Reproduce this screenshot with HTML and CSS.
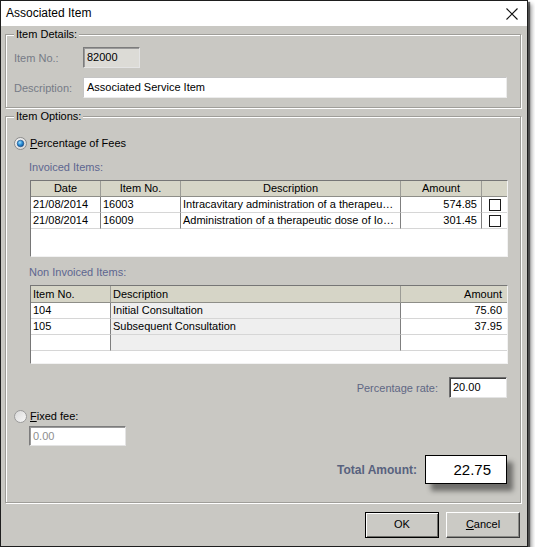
FILE: index.html
```html
<!DOCTYPE html>
<html>
<head>
<meta charset="utf-8">
<title>Associated Item</title>
<link rel="stylesheet" href="styles.css">
</head>
<body>
<div class="window">
  <div class="titlebar">
    <span class="title">Associated Item</span>
    <svg class="close" width="12" height="12" viewBox="0 0 12 12"><path d="M0.5 0.5L11.5 11.5M11.5 0.5L0.5 11.5" stroke="#111" stroke-width="1.1" fill="none"/></svg>
  </div>
  <div class="client">
    <div class="group details">
      <div class="legend">Item Details:</div>
      <div class="field-row first">
        <span class="label">Item No.:</span>
        <div class="input disabled itemno">82000</div>
      </div>
      <div class="field-row second">
        <span class="label">Description:</span>
        <div class="input flat desc">Associated Service Item</div>
      </div>
    </div>

    <div class="group options">
      <div class="legend">Item Options:</div>

      <div class="radio-row pct">
        <svg class="radio" width="13" height="13" viewBox="0 0 13 13">
          <defs>
            <linearGradient id="rg1" x1="0" y1="0" x2="1" y2="1">
              <stop offset="0" stop-color="#f4f4f4"/>
              <stop offset="1" stop-color="#d4d4d4"/>
            </linearGradient>
            <radialGradient id="dot" cx="0.4" cy="0.35" r="0.7">
              <stop offset="0" stop-color="#9fe0ff"/>
              <stop offset="0.5" stop-color="#2c8fd6"/>
              <stop offset="1" stop-color="#0b4d94"/>
            </radialGradient>
          </defs>
          <circle cx="6.5" cy="6.5" r="6" fill="url(#rg1)" stroke="#8a8a8a" stroke-width="1"/>
          <circle cx="6.5" cy="6.5" r="3.3" fill="url(#dot)" stroke="#1d4f84" stroke-width="0.6"/>
        </svg>
        <span class="rlabel"><u>P</u>ercentage of Fees</span>
      </div>

      <div class="sub">
        <div class="caption">Invoiced Items:</div>
        <div class="grid inv">
          <div class="gr hdr">
            <div class="c ctr">Date</div>
            <div class="c ctr">Item No.</div>
            <div class="c ctr">Description</div>
            <div class="c ctr">Amount</div>
            <div class="c last"></div>
          </div>
          <div class="gr row">
            <div class="c">21/08/2014</div>
            <div class="c">16003</div>
            <div class="c">Intracavitary administration of a therapeu…</div>
            <div class="c num">574.85</div>
            <div class="c last chk"><span class="box"></span></div>
          </div>
          <div class="gr row">
            <div class="c">21/08/2014</div>
            <div class="c">16009</div>
            <div class="c">Administration of a therapeutic dose of Io…</div>
            <div class="c num">301.45</div>
            <div class="c last chk"><span class="box"></span></div>
          </div>
        </div>

        <div class="caption cap2">Non Invoiced Items:</div>
        <div class="grid non">
          <div class="gr hdr">
            <div class="c">Item No.</div>
            <div class="c">Description</div>
            <div class="c last num">Amount</div>
          </div>
          <div class="gr row">
            <div class="c">104</div>
            <div class="c shade">Initial Consultation</div>
            <div class="c last num">75.60</div>
          </div>
          <div class="gr row">
            <div class="c">105</div>
            <div class="c shade">Subsequent Consultation</div>
            <div class="c last num">37.95</div>
          </div>
          <div class="gr row">
            <div class="c"></div>
            <div class="c shade"></div>
            <div class="c last num"></div>
          </div>
        </div>
      </div>

      <div class="rate-row">
        <span class="rate-label">Percentage rate:</span>
        <div class="input rate">20.00</div>
      </div>

      <div class="radio-row fixed">
        <svg class="radio" width="13" height="13" viewBox="0 0 13 13">
          <defs>
            <linearGradient id="rg2" x1="0" y1="0" x2="1" y2="1">
              <stop offset="0" stop-color="#d8d8d8"/>
              <stop offset="1" stop-color="#fafafa"/>
            </linearGradient>
          </defs>
          <circle cx="6.5" cy="6.5" r="6" fill="url(#rg2)" stroke="#9a9a9a" stroke-width="1"/>
        </svg>
        <span class="rlabel"><u>F</u>ixed fee:</span>
      </div>
      <div class="input fee">0.00</div>

      <div class="total-row">
        <span class="total-label">Total Amount:</span>
        <div class="total-box">22.75</div>
      </div>
    </div>

    <div class="buttons">
      <div class="btn default">OK</div>
      <div class="btn"><u>C</u>ancel</div>
    </div>
  </div>
</div>
</body>
</html>
```

FILE: styles.css
```css
html, body {
  margin: 0;
  padding: 0;
  background: #ffffff;
}

body {
  font-family: "Liberation Sans", Arial, sans-serif;
  font-size: 11px;
  color: #000;
}

.window {
  width: 528px;
  height: 547px;
  box-sizing: border-box;
  border: 1px solid #1e1e1e;
  background: #c9c8c3;
  box-shadow: 2px 2px 1px rgba(0,0,0,0.55), 4px 4px 4px rgba(0,0,0,0.35);
  display: flex;
  flex-direction: column;
}

.titlebar {
  height: 25px;
  background: #ffffff;
  display: flex;
  align-items: center;
  justify-content: space-between;
  padding: 0 9px 0 5px;
  flex: none;
}

.title {
  font-size: 12px;
  line-height: 15px;
}

.close {
  display: block;
}

.client {
  padding: 0 6px 0 4px;
  display: flex;
  flex-direction: column;
}

.group {
  border: 1px solid #9f9e99;
  box-shadow: 1px 1px 0 #ffffff, inset 1px 1px 0 #ffffff;
  box-sizing: border-box;
  padding: 0 12px 0 8px;
  display: flex;
  flex-direction: column;
}

.legend {
  width: max-content;
  margin: -7px 0 0 0;
  padding: 0 2px;
  background: #c9c8c3;
  line-height: 13px;
  height: 13px;
}

.details {
  margin-top: 8px;
  height: 74px;
}

.options {
  margin-top: 8px;
  height: 387px;
}

.field-row {
  display: flex;
  align-items: center;
}

.field-row.first { margin-top: 6px; }
.field-row.second { margin-top: 9px; }

.label {
  width: 69px;
  color: #767b86;
}

.input {
  box-sizing: border-box;
  height: 21px;
  line-height: 19px;
  padding: 0 3px;
  background: #ffffff;
  border: 1px solid;
  border-color: #7c7c7c #e4e4e4 #e4e4e4 #7c7c7c;
  box-shadow: inset 1px 1px 0 #9a9a9a;
  white-space: nowrap;
}

.input.flat {
  border-color: #c4c4c4 #ececec #ececec #c4c4c4;
  box-shadow: none;
}

.input.disabled {
  background: #dcdbd6;
}

.itemno { width: 57px; }
.desc { width: 424px; }

.radio-row {
  display: flex;
  align-items: center;
  height: 15px;
}

.radio {
  display: block;
  flex: none;
}

.rlabel {
  margin-left: 3px;
  line-height: 15px;
}

.pct { margin-top: 13px; }

.sub {
  margin-left: 16px;
  display: flex;
  flex-direction: column;
}

.caption {
  margin-top: 10px;
  line-height: 13px;
  height: 13px;
  color: #5d6690;
  margin-left: -1px;
}

.caption.cap2 { margin-top: 9px; }

.grid {
  margin-top: 6px;
  width: 478px;
  box-sizing: border-box;
  border: 1px solid;
  border-color: #767676 #f2f2f2 #f2f2f2 #767676;
  background: #ffffff;
}

.grid.inv { height: 77px; }
.grid.non { height: 79px; }

.gr {
  display: grid;
}

.inv .gr { grid-template-columns: 70px 80px 220px 81px 25px; }
.non .gr { grid-template-columns: 80px 290px 106px; }

.c {
  box-sizing: border-box;
  height: 16px;
  line-height: 15px;
  padding: 0 2px;
  border-right: 1px solid #7f7f7f;
  border-bottom: 1px solid #d6d6d6;
  white-space: nowrap;
  overflow: hidden;
}

.c.last { border-right: none; }

.hdr .c {
  background: #d6d5c7;
  border-right-color: #9c9c96;
  border-bottom-color: #8e8e88;
}

.non .hdr .c { height: 17px; line-height: 16px; }

.c.ctr { text-align: center; }
.c.num { text-align: right; padding-right: 4px; }
.non .c.num { padding-right: 5px; }
.c.shade { background: #efefef; }

.c.chk {
  display: flex;
  align-items: center;
  justify-content: center;
}

.box {
  width: 12px;
  height: 12px;
  box-sizing: border-box;
  border: 1px solid #1a1a1a;
  background: #fff;
  margin-left: 1px;
}

.rate-row {
  margin-top: 13px;
  margin-right: 1px;
  display: flex;
  align-items: center;
  justify-content: flex-end;
}

.rate-label {
  color: #5f6784;
  margin-right: 11px;
}

.rate {
  width: 58px;
  border-color: #6e6e6e #e4e4e4 #e4e4e4 #6e6e6e;
  box-shadow: inset 1px 1px 0 #404040;
}

.fixed { margin-top: 11px; }

.fee {
  margin-top: 2px;
  margin-left: 15px;
  width: 97px;
  height: 20px;
  line-height: 18px;
  color: #8e8e8e;
}

.total-row {
  margin-top: 9px;
  margin-right: 1px;
  display: flex;
  align-items: center;
  justify-content: flex-end;
}

.total-label {
  font-size: 12px;
  font-weight: bold;
  color: #58627e;
  margin-right: 8px;
}

.total-box {
  width: 82px;
  height: 29px;
  box-sizing: border-box;
  border: 1px solid #000;
  background: #fff;
  box-shadow: 6px 7px 5px rgba(0,0,0,0.45);
  font-size: 15px;
  line-height: 27px;
  text-align: right;
  padding-right: 15px;
}

.buttons {
  margin-top: 9px;
  margin-right: 1px;
  display: flex;
  justify-content: flex-end;
  gap: 7px;
}

.btn {
  width: 74px;
  height: 26px;
  box-sizing: border-box;
  border: 1px solid;
  border-color: #ffffff #3c3c3c #3c3c3c #ffffff;
  box-shadow: inset -1px -1px 0 #8a8a86;
  background: #cbcac5;
  text-align: center;
  line-height: 23px;
}

.btn.default {
  border-color: #000;
  box-shadow: inset 1px 1px 0 #ffffff, inset -1px -1px 0 #6e6e6a;
}
```
